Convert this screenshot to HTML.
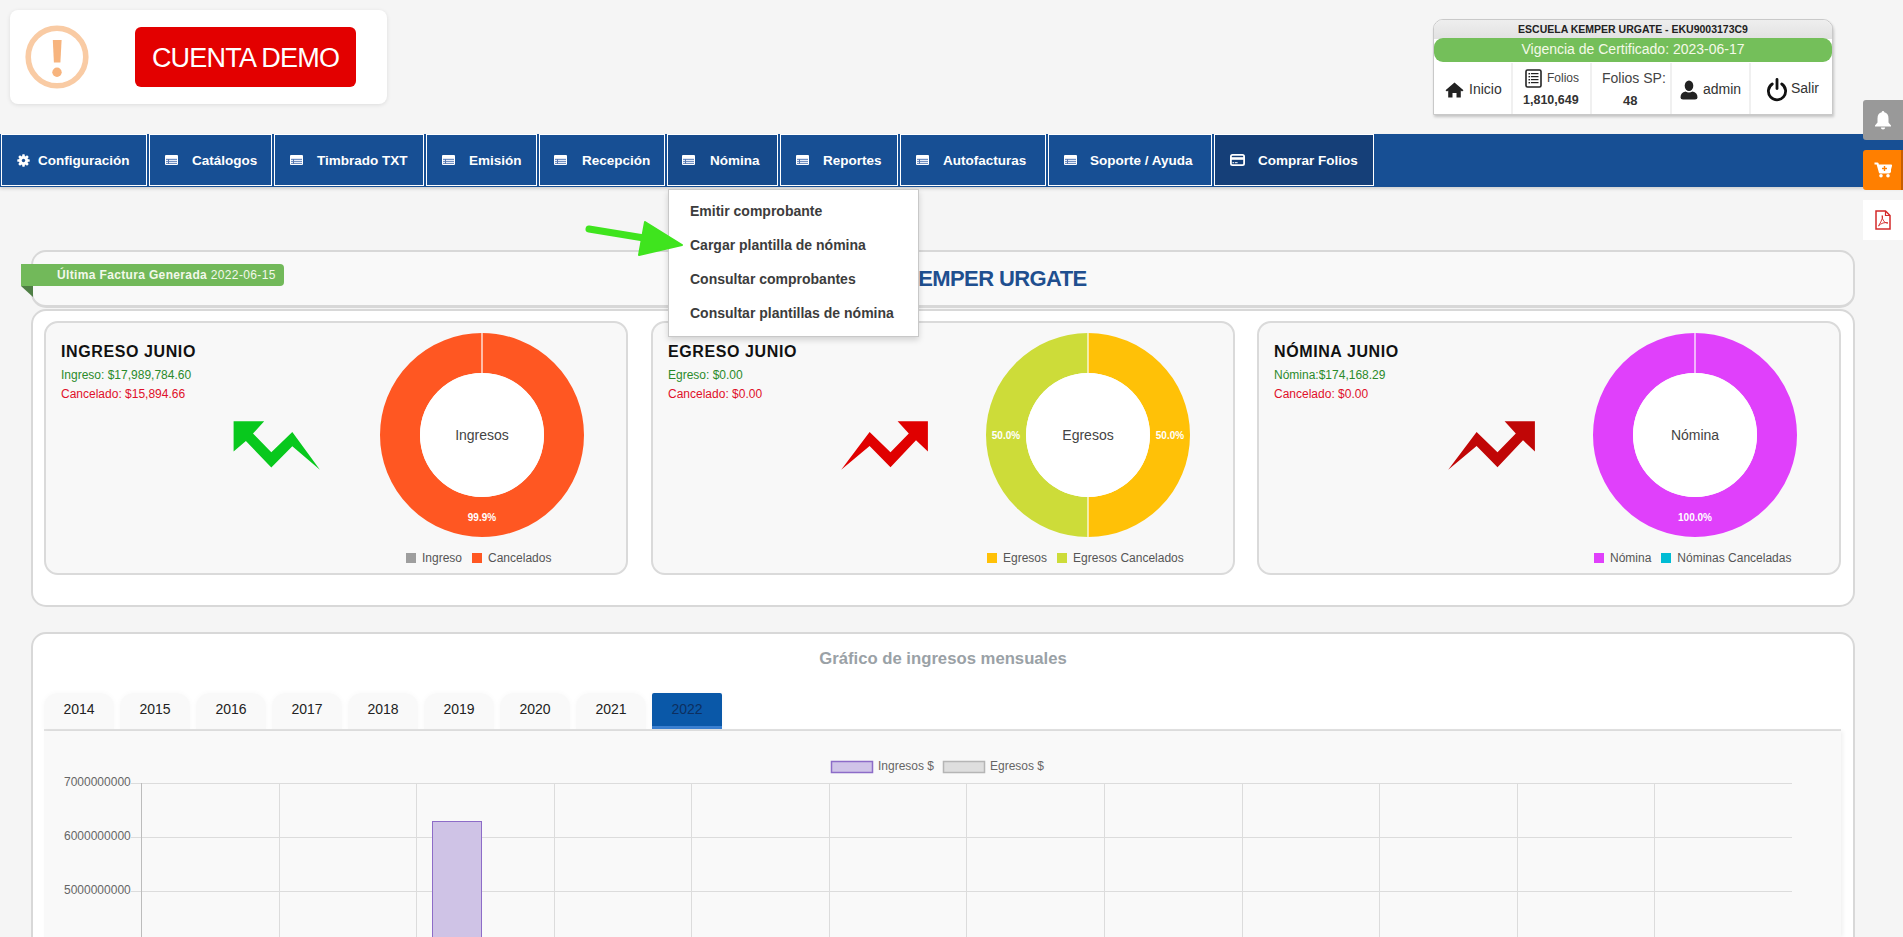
<!DOCTYPE html>
<html><head><meta charset="utf-8">
<style>
*{box-sizing:border-box;margin:0;padding:0}
html,body{width:1903px;height:937px;overflow:hidden}
body{background:#f5f5f5;font-family:"Liberation Sans",sans-serif;position:relative;color:#333}
.abs{position:absolute}
/* demo box */
#demo{left:10px;top:10px;width:377px;height:94px;background:#fff;border-radius:8px;box-shadow:0 1px 4px rgba(0,0,0,0.10)}
#demobtn{left:135px;top:27px;width:221px;height:60px;background:#e30000;border-radius:6px;color:#fff;font-size:27px;letter-spacing:-0.8px;line-height:62px;text-align:center}
/* nav */
#nav{left:0;top:134px;width:1903px;height:53px;background:#174f94;box-shadow:0 2px 3px rgba(0,0,0,0.15)}
.ni{position:absolute;top:134px;height:52px;border:1px solid #fff;color:#fff;font-weight:bold;font-size:13.5px;line-height:50px;white-space:nowrap}
.ni .ico{position:absolute}
.ni .tbl{position:absolute;top:20px;width:13px;height:10px;background:#fff;border-radius:1px}
.ni .tbl:before{content:"";position:absolute;left:1px;right:1px;top:3px;height:6px;background:linear-gradient(#dfe6f5 0,#dfe6f5 1px,#6f8fc2 1px,#6f8fc2 2px,#e6ecf7 2px,#e6ecf7 3px,#6f8fc2 3px,#6f8fc2 4px,#e6ecf7 4px,#e6ecf7 5px,#6f8fc2 5px)}
.ni .tbl:after{content:"";position:absolute;left:3px;top:4px;width:1px;height:5px;background:#5677b0}
.ni .old{position:absolute;top:20px;width:13px;height:10px;background:#dfe6f1;border-radius:1px}
.ni .ic:before{content:"";position:absolute;left:1px;right:1px;top:3px;height:1px;background:#3b63a0;box-shadow:0 2px 0 #3b63a0,0 4px 0 #3b63a0}
.ni .ic:after{content:"";position:absolute;left:3px;top:3px;width:1px;height:6px;background:#3b63a0}
.ni .tx{position:absolute;top:1px}
/* top right card */
#acct{left:1433px;top:19px;width:400px;height:96px;background:#fff;border:1px solid #c9c9c9;border-radius:10px 10px 0 0;box-shadow:1px 2px 3px rgba(0,0,0,0.2);overflow:hidden}
#acct .hd{position:absolute;left:0;top:0;width:398px;height:19px;background:linear-gradient(#eeeeee,#e2e2e2);font-size:10.5px;font-weight:bold;color:#222;text-align:center;line-height:18px}
#acct .gr{position:absolute;left:0;top:18px;width:398px;height:24px;background:#74bf5a;border-radius:9px;color:#f4f9e8;font-size:14px;text-align:center;line-height:22px}
.cell{position:absolute;top:43px;height:52px;border-right:2px solid #f0f0f0;font-size:14px;color:#333}
/* side buttons */
#sb1{left:1863px;top:100px;width:40px;height:40px;background:#999;border-radius:3px 0 0 3px}
#sb2{left:1863px;top:150px;width:40px;height:40px;background:#ff7f00;border-radius:3px 0 0 3px}
#sb3{left:1863px;top:200px;width:40px;height:40px;background:#fff}
/* panels */
.panel{position:absolute;background:#fff;border:2px solid #d8d8d8;border-radius:15px}
#hdr{left:31px;top:250px;width:1824px;height:58px;background:#f9f9f9;border-bottom-width:3px}
#main{left:31px;top:309px;width:1824px;height:298px}
#chartp{left:31px;top:632px;width:1824px;height:340px}
.card{position:absolute;top:321px;width:584px;height:254px;background:#f8f8f8;border:2px solid #dadada;border-radius:14px}
.card h3{position:absolute;left:15px;top:20px;font-size:16px;letter-spacing:0.6px;color:#111;font-weight:bold}
.card .l1{position:absolute;left:15px;top:45px;font-size:12px;color:#2b8a2b}
.card .l2{position:absolute;left:15px;top:64px;font-size:12px;color:#e0102a}
.leg{position:absolute;top:228px;font-size:12px;color:#555;white-space:nowrap}
.leg i{display:inline-block;width:10px;height:10px;vertical-align:-1px;margin-right:6px}
/* dropdown */
#dd{left:668px;top:189px;width:251px;height:148px;background:#fff;border:1px solid #c8c8c8;box-shadow:0 3px 6px rgba(0,0,0,0.15)}
#dd div{position:absolute;left:21px;font-size:14px;font-weight:bold;color:#3c3c3c;white-space:nowrap}
.tab{position:absolute;top:693px;width:70px;height:36px;border-radius:14px 14px 0 0;background:#f9f9f9;box-shadow:0 0 5px 1px #fafafa;font-size:14px;color:#222;line-height:32px;text-align:center}
.tab.act{background:#0a58a8;color:#0d2f60;border-radius:2px 2px 0 0;border-bottom:3px solid #3a7fd0}
</style></head><body>

<div id="demo" class="abs">
  <svg class="abs" style="left:15px;top:15px" width="64" height="64" viewBox="0 0 64 64">
    <circle cx="32" cy="32" r="28.8" fill="none" stroke="#f9cba4" stroke-width="5.6"/>
    <path d="M27.8 15 H36.6 L35.4 37.4 H28.9 Z" fill="#f7b47e"/>
    <circle cx="32" cy="47.3" r="4.7" fill="#f7b47e"/>
  </svg>
</div>
<div id="demobtn" class="abs">CUENTA DEMO</div>

<div id="acct" class="abs">
  <div class="hd">ESCUELA KEMPER URGATE - EKU9003173C9</div>
  <div class="gr">Vigencia de Certificado: 2023-06-17</div>
<div class="cell" style="left:0;width:79px"><svg style="position:absolute;left:11px;top:19px" width="19" height="16" viewBox="0 0 19 16"><path d="M9.5 0.5 L0.5 8.3 L2 9.6 L3.2 8.6 V15.5 H7.5 V11 H11.5 V15.5 H15.8 V8.6 L17 9.6 L18.5 8.3 Z" fill="#222"/></svg><span style="position:absolute;left:35px;top:18px">Inicio</span></div>
<div class="cell" style="left:79px;width:79px"><svg style="position:absolute;left:12px;top:6px" width="17" height="19" viewBox="0 0 17 19"><rect x="1" y="1" width="15" height="17" rx="1.5" fill="none" stroke="#222" stroke-width="1.6"/><g fill="#222"><rect x="3.5" y="4" width="1.6" height="1.4"/><rect x="6" y="4" width="7.5" height="1.2"/><rect x="3.5" y="7" width="1.6" height="1.4"/><rect x="6" y="7" width="7.5" height="1.2"/><rect x="3.5" y="10" width="1.6" height="1.4"/><rect x="6" y="10" width="7.5" height="1.2"/><rect x="3.5" y="13" width="1.6" height="1.4"/><rect x="6" y="13" width="7.5" height="1.2"/></g></svg><span style="position:absolute;left:34px;top:8px;font-size:12px;color:#444">Folios</span><b style="position:absolute;left:10px;top:30px;font-size:12.5px;color:#333">1,810,649</b></div>
<div class="cell" style="left:158px;width:80px"><span style="position:absolute;left:10px;top:7px;color:#444">Folios SP:</span><b style="position:absolute;left:31px;top:30px;font-size:13px;color:#333">48</b></div>
<div class="cell" style="left:238px;width:79px"><svg style="position:absolute;left:8px;top:17px" width="18" height="20" viewBox="0 0 18 20"><ellipse cx="9" cy="5.8" rx="4.3" ry="5.3" fill="#222"/><path d="M0.5 17.5 Q0.5 12.5 5.5 11.5 Q9 13.5 12.5 11.5 Q17.5 12.5 17.5 17.5 Q17.5 19.5 15 19.5 H3 Q0.5 19.5 0.5 17.5 Z" fill="#222"/></svg><span style="position:absolute;left:31px;top:18px">admin</span></div>
<div class="cell" style="left:317px;width:83px;border-right:none"><svg style="position:absolute;left:15px;top:15px" width="22" height="24" viewBox="0 0 22 24"><path d="M6.3 6 A8.6 8.6 0 1 0 15.7 6" fill="none" stroke="#111" stroke-width="2.8" stroke-linecap="round"/><line x1="11" y1="1.5" x2="11" y2="10.5" stroke="#111" stroke-width="2.8" stroke-linecap="round"/></svg><span style="position:absolute;left:40px;top:17px">Salir</span></div>
</div>

<div id="nav" class="abs"></div>
<div class="ni" style="left:1px;width:146px;"><svg class="ico" style="left:15px;top:19px" width="13" height="13" viewBox="0 0 13 13"><g fill="#fff"><circle cx="6.5" cy="6.5" r="4.6"/><rect x="5.2" y="0.3" width="2.6" height="12.4" rx="0.6"/><rect x="0.3" y="5.2" width="12.4" height="2.6" rx="0.6"/><rect x="5.2" y="0.3" width="2.6" height="12.4" rx="0.6" transform="rotate(45 6.5 6.5)"/><rect x="5.2" y="0.3" width="2.6" height="12.4" rx="0.6" transform="rotate(-45 6.5 6.5)"/></g><circle cx="6.5" cy="6.5" r="1.7" fill="#1b4f93"/></svg><span class="tx" style="left:36px">Configuración</span></div>
<div class="ni" style="left:149px;width:123px;"><i class="tbl" style="left:15px"></i><span class="tx" style="left:42px">Catálogos</span></div>
<div class="ni" style="left:274px;width:150px;"><i class="tbl" style="left:15px"></i><span class="tx" style="left:42px">Timbrado TXT</span></div>
<div class="ni" style="left:426px;width:111px;"><i class="tbl" style="left:15px"></i><span class="tx" style="left:42px">Emisión</span></div>
<div class="ni" style="left:539px;width:126px;"><i class="tbl" style="left:14px"></i><span class="tx" style="left:42px">Recepción</span></div>
<div class="ni" style="left:667px;width:111px;background:#164a8b;"><i class="tbl" style="left:14px"></i><span class="tx" style="left:42px">Nómina</span></div>
<div class="ni" style="left:780px;width:118px;"><i class="tbl" style="left:15px"></i><span class="tx" style="left:42px">Reportes</span></div>
<div class="ni" style="left:900px;width:146px;"><i class="tbl" style="left:15px"></i><span class="tx" style="left:42px">Autofacturas</span></div>
<div class="ni" style="left:1048px;width:164px;"><i class="tbl" style="left:15px"></i><span class="tx" style="left:41px">Soporte / Ayuda</span></div>
<div class="ni" style="left:1214px;width:160px;background:#153f78;"><svg class="ico" style="left:15px;top:19px" width="15" height="12" viewBox="0 0 15 12"><rect x="0.9" y="0.9" width="13.2" height="10.2" rx="1.6" fill="none" stroke="#fff" stroke-width="1.8"/><rect x="1" y="3.2" width="13" height="2.6" fill="#fff"/><rect x="2.5" y="8.2" width="1.5" height="1" fill="#fff"/><rect x="4.8" y="8.2" width="2.8" height="1" fill="#fff"/></svg><span class="tx" style="left:43px">Comprar Folios</span></div>
<div id="sb1" class="abs"><svg style="position:absolute;left:11px;top:10px" width="18" height="20" viewBox="0 0 18 20"><path d="M9 1 Q10.3 1 10.3 2.3 Q14.5 3.3 14.5 8.5 V12.5 L17 15.5 V16.5 H1 V15.5 L3.5 12.5 V8.5 Q3.5 3.3 7.7 2.3 Q7.7 1 9 1 Z" fill="#fff"/><path d="M6.8 17.5 H11.2 Q11 19.5 9 19.5 Q7 19.5 6.8 17.5 Z" fill="#fff"/></svg></div>
<div id="sb2" class="abs"><svg style="position:absolute;left:11px;top:12px" width="18" height="16" viewBox="0 0 18 16"><path d="M0.5 1.5 H3.5 L6 10.5 H15 L17 3.5 H5" fill="none" stroke="#fff" stroke-width="2.2" stroke-linejoin="round"/><rect x="5" y="3.5" width="12" height="7" fill="#fff"/><rect x="9.8" y="4" width="1.4" height="5" fill="#ff7f00"/><rect x="8" y="5.8" width="5" height="1.4" fill="#ff7f00"/><circle cx="7" cy="13.8" r="1.8" fill="#fff"/><circle cx="14" cy="13.8" r="1.8" fill="#fff"/></svg><div style="position:absolute;right:0;top:0;width:2px;height:40px;background:#c85e00"></div></div>
<div id="sb3" class="abs"><svg style="position:absolute;left:12px;top:10px" width="16" height="20" viewBox="0 0 16 20"><path d="M1 1 H10.5 L15 5.5 V19 H1 Z" fill="none" stroke="#d42a2a" stroke-width="1.5"/><path d="M10.5 1 V5.5 H15" fill="none" stroke="#d42a2a" stroke-width="1.2"/><path d="M3.5 16 Q6 12 7.5 8 Q7.8 5 7 5.5 Q6.5 8 9 11.5 Q11 13.5 13 13 Q11.5 12 8 13 Q5 14 3.5 16 Z" fill="none" stroke="#d42a2a" stroke-width="0.9"/></svg></div>

<div id="hdr" class="panel"></div>
<div class="abs" style="left:21px;top:264px;width:263px;height:22px;background:#72b95a;border-radius:0 4px 4px 0;color:#f3f8ea;font-size:12px;font-weight:bold;line-height:22px;white-space:nowrap"><span style="position:absolute;left:36px;top:0;letter-spacing:0.35px">Última Factura Generada <span style="font-weight:normal">2022-06-15</span></span></div>
<svg class="abs" style="left:21px;top:286px" width="12" height="12" viewBox="0 0 12 12"><path d="M0 0 H12 V11 Z" fill="#4f7f45"/></svg>
<div class="abs" style="left:642px;top:266px;width:600px;text-align:center;font-size:22px;font-weight:bold;color:#1f4f8f;letter-spacing:-0.6px">ESCUELA KEMPER URGATE</div>
<div id="main" class="panel"></div>
<div class="card" style="left:44px">
<h3>INGRESO JUNIO</h3><div class="l1">Ingreso: $17,989,784.60</div><div class="l2">Cancelado: $15,894.66</div>
<div class="leg" style="left:360px"><i style="background:#9e9e9e"></i>Ingreso<i style="background:#ff5722;margin-left:10px"></i>Cancelados</div>
</div>
<div class="card" style="left:651px">
<h3>EGRESO JUNIO</h3><div class="l1">Egreso: $0.00</div><div class="l2">Cancelado: $0.00</div>
<div class="leg" style="left:334px"><i style="background:#ffc107"></i>Egresos<i style="background:#cddc39;margin-left:10px"></i>Egresos Cancelados</div>
</div>
<div class="card" style="left:1257px">
<h3>NÓMINA JUNIO</h3><div class="l1">Nómina:$174,168.29</div><div class="l2">Cancelado: $0.00</div>
<div class="leg" style="left:335px"><i style="background:#e040fb"></i>Nómina<i style="background:#00bcd4;margin-left:10px"></i>Nóminas Canceladas</div>
</div>
<svg class="abs" style="left:0;top:0" width="1903" height="937">
<circle cx="482" cy="435" r="82.0" fill="none" stroke="#ff5722" stroke-width="40"/><line x1="482" y1="333" x2="482" y2="373" stroke="#fff" stroke-width="1.2"/>
<path d="M1088.00 333.00 A102 102 0 0 1 1088.00 537.00 L1088.00 497.00 A62 62 0 0 0 1088.00 373.00 Z" fill="#ffc107"/><path d="M1088.00 537.00 A102 102 0 0 1 1088.00 333.00 L1088.00 373.00 A62 62 0 0 0 1088.00 497.00 Z" fill="#cddc39"/><line x1="1088" y1="333" x2="1088" y2="373" stroke="#fff" stroke-width="1.2"/><line x1="1088" y1="497" x2="1088" y2="537" stroke="#fff" stroke-width="1.2"/>
<circle cx="1695" cy="435" r="82.0" fill="none" stroke="#e040fb" stroke-width="40"/><line x1="1695" y1="333" x2="1695" y2="373" stroke="#fff" stroke-width="1.2"/>
<circle cx="482" cy="435" r="62" fill="#fff"/><circle cx="1088" cy="435" r="62" fill="#fff"/><circle cx="1695" cy="435" r="62" fill="#fff"/>
<g font-family="Liberation Sans" font-size="14" fill="#444" text-anchor="middle"><text x="482" y="440">Ingresos</text><text x="1088" y="440">Egresos</text><text x="1695" y="440">Nómina</text></g>
<g font-family="Liberation Sans" font-size="10" font-weight="bold" fill="#fff" text-anchor="middle"><text x="482" y="521">99.9%</text><text x="1006" y="439">50.0%</text><text x="1170" y="439">50.0%</text><text x="1695" y="521">100.0%</text></g>
<path d="M233.6 421.2 L264.2 421.2 L253 433.5 L271.3 452.2 L292.3 432 L319.9 469.8 L292.3 446.2 L271.3 467.5 L245.9 441 L233.6 451.5 Z" fill="#08c81d"/>
<path d="M841.2 469.8 L869.6 432 L890.5 452.2 L908.8 433.5 L897.6 421.2 L927.9 421.2 L927.9 451.5 L916 440.3 L890.5 467.2 L869.6 445.9 Z" fill="#e00000"/>
<path d="M 1448.2 469.8 L 1476.6 432.0 L 1497.5 452.2 L 1515.8 433.5 L 1504.6 421.2 L 1534.9 421.2 L 1534.9 451.5 L 1523.0 440.3 L 1497.5 467.2 L 1476.6 445.9 Z" fill="#c00606"/>
</svg>
<div id="chartp" class="panel"></div>
<div class="abs" style="left:643px;top:649px;width:600px;text-align:center;font-size:16.7px;font-weight:bold;color:#9aa1a6">Gráfico de ingresos mensuales</div>
<div class="tab" style="left:44px">2014</div><div class="tab" style="left:120px">2015</div><div class="tab" style="left:196px">2016</div><div class="tab" style="left:272px">2017</div><div class="tab" style="left:348px">2018</div><div class="tab" style="left:424px">2019</div><div class="tab" style="left:500px">2020</div><div class="tab" style="left:576px">2021</div><div class="tab act" style="left:652px">2022</div>
<div class="abs" style="left:44px;top:729px;width:1797px;height:2px;background:#e2e2e2"></div>
<div class="abs" style="left:44px;top:731px;width:1797px;height:206px;background:#f9f9f9;box-shadow:2px 0 4px rgba(0,0,0,0.06)"></div>
<svg class="abs" style="left:0;top:0" width="1903" height="937"><line x1="131" y1="783.5" x2="1792" y2="783.5" stroke="#dcdcdc" stroke-width="1"/><line x1="131" y1="837.5" x2="1792" y2="837.5" stroke="#dcdcdc" stroke-width="1"/><line x1="131" y1="891.5" x2="1792" y2="891.5" stroke="#dcdcdc" stroke-width="1"/><line x1="141.5" y1="783" x2="141.5" y2="937" stroke="#bcbcbc" stroke-width="1"/><line x1="279.5" y1="783" x2="279.5" y2="937" stroke="#dcdcdc" stroke-width="1"/><line x1="416.5" y1="783" x2="416.5" y2="937" stroke="#dcdcdc" stroke-width="1"/><line x1="554.5" y1="783" x2="554.5" y2="937" stroke="#dcdcdc" stroke-width="1"/><line x1="691.5" y1="783" x2="691.5" y2="937" stroke="#dcdcdc" stroke-width="1"/><line x1="829.5" y1="783" x2="829.5" y2="937" stroke="#dcdcdc" stroke-width="1"/><line x1="966.5" y1="783" x2="966.5" y2="937" stroke="#dcdcdc" stroke-width="1"/><line x1="1104.5" y1="783" x2="1104.5" y2="937" stroke="#dcdcdc" stroke-width="1"/><line x1="1242.5" y1="783" x2="1242.5" y2="937" stroke="#dcdcdc" stroke-width="1"/><line x1="1379.5" y1="783" x2="1379.5" y2="937" stroke="#dcdcdc" stroke-width="1"/><line x1="1517.5" y1="783" x2="1517.5" y2="937" stroke="#dcdcdc" stroke-width="1"/><line x1="1654.5" y1="783" x2="1654.5" y2="937" stroke="#dcdcdc" stroke-width="1"/>
<rect x="432.5" y="821.5" width="49" height="130" fill="#cfc3e6" stroke="#8d6cc8" stroke-width="1"/>
<rect x="831.5" y="761.5" width="41" height="11" fill="#d0c4e8" stroke="#8d6cc8" stroke-width="1.5"/>
<rect x="943.5" y="761.5" width="41" height="11" fill="#dedede" stroke="#b5b5b5" stroke-width="1.5"/>
<g font-family="Liberation Sans" font-size="12" fill="#666"><text x="878" y="770">Ingresos $</text><text x="990" y="770">Egresos $</text>
<text x="64" y="786">7000000000</text><text x="64" y="840">6000000000</text><text x="64" y="894">5000000000</text></g>
</svg>

<div id="dd" class="abs">
  <div style="top:13px">Emitir comprobante</div>
  <div style="top:47px">Cargar plantilla de nómina</div>
  <div style="top:81px">Consultar comprobantes</div>
  <div style="top:115px">Consultar plantillas de nómina</div>
</div>

<svg class="abs" style="left:0;top:0" width="1903" height="937"><line x1="589" y1="229" x2="650" y2="239" stroke="#3fe41e" stroke-width="7" stroke-linecap="round"/><path d="M645 222 L682 245 L639 255 Z" fill="#3fe41e" stroke="#3fe41e" stroke-width="2" stroke-linejoin="round"/></svg>
</body></html>
